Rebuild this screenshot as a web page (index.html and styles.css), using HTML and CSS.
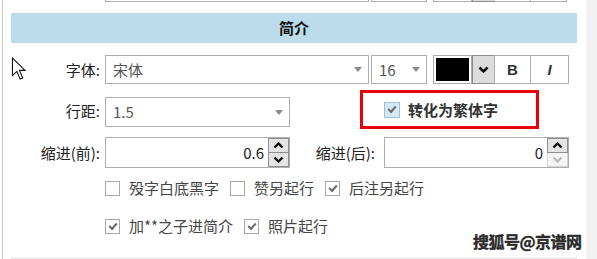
FILE: index.html
```html
<!DOCTYPE html>
<html lang="zh-CN">
<head>
    <meta charset="UTF-8">
    <title>简介设置</title>
    <link rel="stylesheet" href="styles.css">
</head>
<body>
    <div class="panel">
        <!-- previous section, scrolled off the top -->
        <div class="row prev-row">
            <span class="label"></span>
            <div class="select font-select"></div>
            <div class="select size-select"></div>
            <div class="color-box"><span class="swatch"></span></div>
            <div class="color-drop"></div>
            <div class="tool-btn"></div>
            <div class="tool-btn"></div>
        </div>

        <div class="section-title">简介</div>

        <div class="row font-row">
            <span class="label">字体:</span>
            <div class="select font-select"><span>宋体</span><i class="tri"></i></div>
            <div class="select size-select"><span>16</span><i class="tri"></i></div>
            <div class="color-box"><span class="swatch"></span></div>
            <div class="color-drop">
                <svg width="11" height="8" viewBox="0 0 11 8"><polyline points="1.5,1.5 5.5,5.5 9.5,1.5" fill="none" stroke="#111" stroke-width="2.6"/></svg>
            </div>
            <div class="tool-btn bold">B</div>
            <div class="tool-btn italic">I</div>
        </div>

        <div class="row spacing-row">
            <span class="label">行距:</span>
            <div class="select half-select"><span>1.5</span><i class="tri"></i></div>
            <div class="highlight">
                <span class="check blue checked"></span>
                <span class="highlight-text">转化为繁体字</span>
            </div>
        </div>

        <div class="row indent-row">
            <span class="label">缩进(前):</span>
            <div class="spin half-select">
                <span class="spin-value">0.6</span>
                <div class="spin-btns">
                    <div class="spin-btn"><svg width="11" height="7" viewBox="0 0 11 7"><polyline points="1.5,5.5 5.5,1.5 9.5,5.5" fill="none" stroke="#111" stroke-width="2.4"/></svg></div>
                    <div class="spin-btn"><svg width="11" height="7" viewBox="0 0 11 7"><polyline points="1.5,1.5 5.5,5.5 9.5,1.5" fill="none" stroke="#111" stroke-width="2.4"/></svg></div>
                </div>
            </div>
            <span class="label label-after">缩进(后):</span>
            <div class="spin wide-spin">
                <span class="spin-value">0</span>
                <div class="spin-btns">
                    <div class="spin-btn"><svg width="11" height="7" viewBox="0 0 11 7"><polyline points="1.5,5.5 5.5,1.5 9.5,5.5" fill="none" stroke="#111" stroke-width="2.4"/></svg></div>
                    <div class="spin-btn disabled"><svg width="11" height="7" viewBox="0 0 11 7"><polyline points="1.5,1.5 5.5,5.5 9.5,1.5" fill="none" stroke="#b8b8b8" stroke-width="2"/></svg></div>
                </div>
            </div>
        </div>

        <div class="row check-row first">
            <label class="opt"><span class="check"></span>殁字白底黑字</label>
            <label class="opt"><span class="check"></span>赞另起行</label>
            <label class="opt"><span class="check checked"></span>后注另起行</label>
        </div>

        <div class="row check-row second">
            <label class="opt"><span class="check checked"></span>加**之子进简介</label>
            <label class="opt"><span class="check checked"></span>照片起行</label>
        </div>

        <div class="bottom-bar"></div>

        <svg class="cursor" width="16" height="24" viewBox="0 0 14 22">
            <path d="M1,1 L1,17 L5,13.2 L8,20.2 L10.4,19.2 L7.5,12.3 L12.6,12.3 Z" fill="#fff" stroke="#111" stroke-width="1" stroke-linejoin="miter"/>
        </svg>
    </div>
    <div class="side"></div>

    <div class="watermark">搜狐号@京谱网</div>
</body>
</html>
```

FILE: styles.css
```css
body {
    margin: 0;
    width: 597px;
    height: 259px;
    overflow: hidden;
    display: flex;
    background: #fff;
    font-family: "Noto Sans CJK SC", "Noto Sans", sans-serif;
    font-size: 15px;
    color: #222;
    position: relative;
}

.panel {
    position: relative;
    width: 566px;
    margin-left: 2px;
    border-left: 1px solid #c9c9c9;
    padding: 0 9px 0 8px;
    display: flex;
    flex-direction: column;
}

.side {
    flex: 1;
    background: #f2f2f2;
}

.row {
    display: flex;
    align-items: center;
    flex-shrink: 0;
}

.label {
    width: 89px;
    padding-right: 5px;
    text-align: right;
    line-height: 20px;
    color: #222;
    white-space: nowrap;
}

/* inputs */
.select,
.spin,
.color-box,
.color-drop,
.tool-btn {
    box-sizing: border-box;
    height: 29px;
    border: 1px solid #adadad;
    background: #fff;
}

.select {
    display: flex;
    align-items: center;
    padding: 0 6px 0 7px;
    color: #555;
    line-height: 20px;
}

.select span {
    flex: 1;
}

.tri {
    width: 0;
    height: 0;
    border-left: 4px solid transparent;
    border-right: 4px solid transparent;
    border-top: 5px solid #8a8a8a;
}

.font-select {
    width: 264px;
}

.size-select {
    width: 56px;
    margin-left: 2px;
}

.color-box {
    width: 39px;
    margin-left: 6px;
    padding: 2px;
}

.swatch {
    display: block;
    height: 100%;
    background: #000;
}

.color-drop {
    width: 23px;
    background: #dcdcdc;
    border-color: #8c8c8c;
    display: flex;
    align-items: center;
    justify-content: center;
}

.tool-btn {
    width: 37px;
    margin-left: -1px;
    display: flex;
    align-items: center;
    justify-content: center;
    font-family: "Liberation Sans", sans-serif;
    font-weight: bold;
    font-size: 15px;
    color: #333;
}

.tool-btn.italic {
    width: 39px;
    font-style: italic;
}

.prev-row {
    height: 28px;
    margin-top: -26px;
}

.prev-row .select,
.prev-row .color-box,
.prev-row .color-drop,
.prev-row .tool-btn {
    height: 28px;
}

.section-title {
    flex-shrink: 0;
    margin-top: 11px;
    height: 30px;
    background: #bcdcec;
    text-align: center;
    font-weight: bold;
    line-height: 30px;
    color: #111;
}

.font-row {
    margin-top: 12px;
    height: 29px;
}

.spacing-row {
    margin-top: 6px;
    height: 39px;
    align-items: flex-start;
}

.spacing-row .label {
    margin-top: 11px;
}

.half-select {
    width: 185px;
    height: 30px;
    margin-top: 7px;
}

.highlight {
    box-sizing: border-box;
    width: 179px;
    height: 39px;
    margin-left: 70px;
    border: 3px solid #e8000b;
    display: flex;
    align-items: center;
    padding-left: 21px;
}

.highlight-text {
    margin-left: 8px;
    font-weight: bold;
    color: #333;
    line-height: 20px;
}

.indent-row {
    margin-top: 8px;
    height: 31px;
}

.indent-row .half-select {
    margin-top: 0;
    height: 31px;
}

.label-after {
    width: 85px;
    padding-right: 9px;
}

.spin {
    display: flex;
    align-items: stretch;
    height: 31px;
}

.wide-spin {
    width: 185px;
}

.spin-value {
    flex: 1;
    text-align: right;
    padding-right: 4px;
    line-height: 29px;
    color: #222;
}

.spin-btns {
    width: 21px;
    display: flex;
    flex-direction: column;
}

.spin-btn {
    flex: 1;
    box-sizing: border-box;
    background: #e4e4e4;
    border: 1px solid #8f8f8f;
    display: flex;
    align-items: center;
    justify-content: center;
}

.spin-btn + .spin-btn {
    border-top: none;
}

.spin-btn.disabled {
    background: #f4f4f4;
    border-color: #d2d2d2;
}

/* checkboxes */
.check {
    box-sizing: border-box;
    width: 15px;
    height: 15px;
    border: 1px solid #a8a8a8;
    background: #fff;
    position: relative;
    flex-shrink: 0;
}

.check.checked::after {
    content: "";
    position: absolute;
    left: 3px;
    top: 2px;
    width: 6px;
    height: 3px;
    border-left: 2px solid #6a6a6a;
    border-bottom: 2px solid #6a6a6a;
    transform: rotate(-48deg);
    transform-origin: center;
    margin-top: 1px;
}

.check.blue {
    width: 16px;
    height: 16px;
    border-color: #9ec0dc;
    background: #d8e7f4;
}

.check-row {
    height: 20px;
    padding-left: 94px;
    gap: 11px;
}

.check-row.first {
    margin-top: 10px;
}

.check-row.second {
    margin-top: 18px;
}

.opt {
    display: flex;
    align-items: center;
    gap: 9px;
    color: #444;
    line-height: 20px;
    white-space: nowrap;
}

.bottom-bar {
    flex-shrink: 0;
    margin-top: 21px;
    height: 4px;
    background: #efefef;
}

.cursor {
    position: absolute;
    left: 8px;
    top: 57px;
}

.watermark {
    position: absolute;
    left: 473px;
    top: 230px;
    font-size: 16px;
    font-weight: bold;
    line-height: 22px;
    color: #2a2a2a;
    -webkit-text-stroke: 0.4px #2a2a2a;
    text-shadow: 0 0 1px #fff, 0 0 2px #fff;
    letter-spacing: -0.5px;
}
```
